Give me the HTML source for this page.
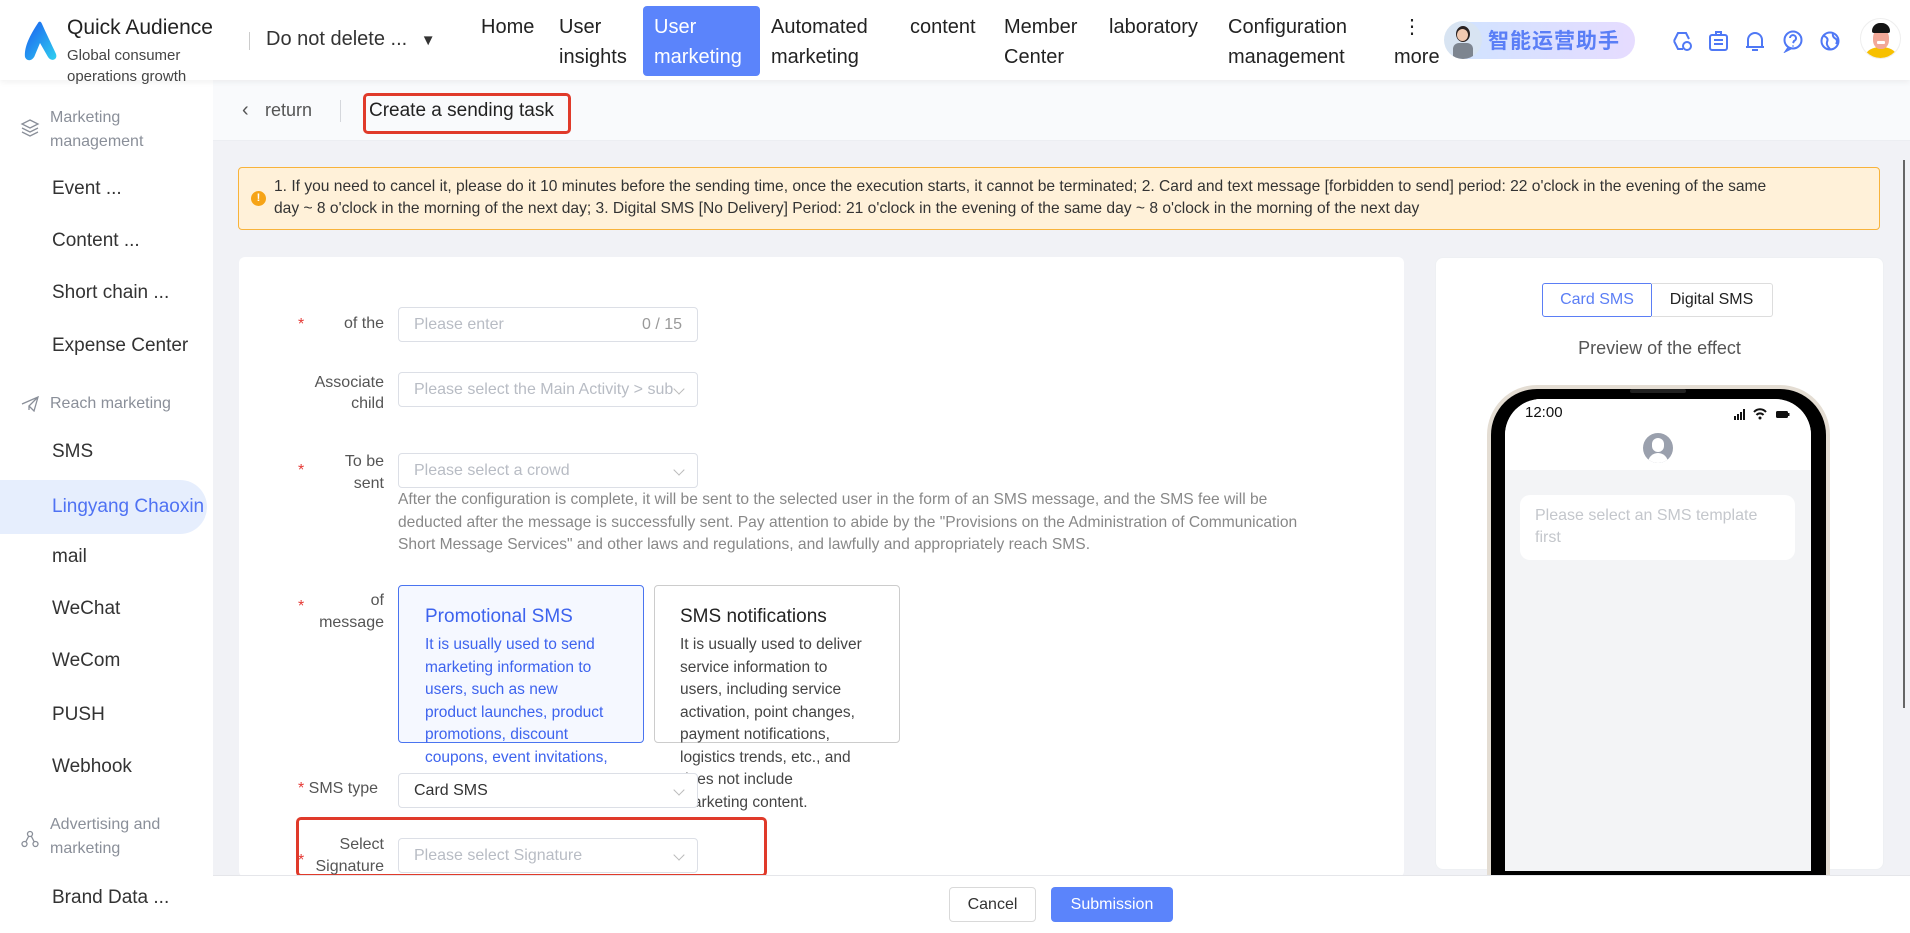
<!DOCTYPE html>
<html><head><meta charset="utf-8"><style>
*{box-sizing:border-box;margin:0;padding:0}
body{width:1910px;height:933px;overflow:hidden;background:#f1f2f6;font-family:"Liberation Sans","Noto Sans CJK SC",sans-serif;color:#333;position:relative}
.a{position:absolute;white-space:nowrap}
.hdr{position:absolute;left:0;top:0;width:1910px;height:80px;background:#fff;box-shadow:0 2px 6px rgba(0,0,0,.06);z-index:3}
.nav{font-size:20px;color:#222;line-height:30px}
.side{position:absolute;left:0;top:80px;width:213px;height:853px;background:#fff}
.si{position:absolute;left:52px;font-size:19px;color:#333;line-height:24px}
.sg{position:absolute;left:50px;font-size:16px;color:#8a8f99;line-height:24px}
.lab{position:absolute;text-align:right;font-size:16px;color:#555;line-height:22px;width:140px;left:244px}
.star{position:absolute;left:298px;color:#e53935;font-size:16px}
.inp{position:absolute;left:398px;width:300px;height:35px;border:1px solid #dcdfe6;border-radius:4px;background:#fff;font-size:16px;color:#b8bcc4;padding-left:15px;line-height:33px;overflow:hidden}
.chev{position:absolute;right:14px;top:12px;width:8px;height:8px;border-right:1px solid #bbb;border-bottom:1px solid #bbb;transform:rotate(45deg)}
</style></head><body>
<div class="hdr">
 <svg class="a" style="left:20px;top:21px" width="40" height="42" viewBox="0 0 40 42"><defs><linearGradient id="g" x1="0" y1="0" x2="1" y2="1"><stop offset="0" stop-color="#1a5cf0"/><stop offset="1" stop-color="#2fd0f0"/></linearGradient></defs><path d="M18 2 C10 14 4 26 5 36 C7 41 13 40 15 34 L20 22 L28 36 C31 41 38 39 36 33 C31 22 26 12 22 3 C21 0 19 0 18 2Z" fill="url(#g)"/></svg>
 <div class="a" style="left:67px;top:16px;font-size:21px;color:#222">Quick Audience</div>
 <div class="a" style="left:67px;top:45px;font-size:15px;color:#444;line-height:21px">Global consumer<br>operations growth</div>
 <div class="a" style="left:249px;top:32px;width:1px;height:18px;background:#ccc"></div>
 <div class="a" style="left:266px;top:28px;font-size:20px;color:#333">Do not delete ... <span style="font-size:15px;margin-left:8px">▼</span></div>
 <div class="a nav" style="left:481px;top:12px">Home</div>
 <div class="a nav" style="left:559px;top:12px">User<br>insights</div>
 <div class="a" style="left:643px;top:6px;width:117px;height:70px;background:#5b84fb;border-radius:4px"></div>
 <div class="a nav" style="left:654px;top:12px;color:#fff">User<br>marketing</div>
 <div class="a nav" style="left:771px;top:12px">Automated<br>marketing</div>
 <div class="a nav" style="left:910px;top:12px">content</div>
 <div class="a nav" style="left:1004px;top:12px">Member<br>Center</div>
 <div class="a nav" style="left:1109px;top:12px">laboratory</div>
 <div class="a nav" style="left:1228px;top:12px">Configuration<br>management</div>
 <div class="a nav" style="left:1402px;top:12px">⋮<br><span style="margin-left:-8px">more</span></div>
 <div class="a" style="left:1445px;top:22px;width:190px;height:37px;border-radius:19px;background:linear-gradient(90deg,#cfe3ff,#e6dcff)"></div>
 <div class="a" style="left:1444px;top:21px;width:38px;height:38px;border-radius:50%;background:#d8e4f2;overflow:hidden"><div style="position:absolute;left:12px;top:5px;width:14px;height:16px;border-radius:50%;background:#2a2220"></div><div style="position:absolute;left:13px;top:8px;width:11px;height:12px;border-radius:50%;background:#f1c9b0"></div><div style="position:absolute;left:9px;top:22px;width:20px;height:20px;border-radius:6px;background:#7d8590"></div></div>
 <div class="a" style="left:1488px;top:25px;font-size:21px;font-weight:bold;color:#5a7ef6;font-family:'Noto Sans CJK SC',sans-serif;letter-spacing:1px">智能运营助手</div>
 <svg class="a" style="left:1670px;top:29px" width="180" height="24" viewBox="0 0 180 24" fill="none" stroke="#4f78f5" stroke-width="2">
  <path d="M4 12 L8 4 H16 L19 10 M13 20 H8 L4 12"/><circle cx="17" cy="17" r="4"/>
  <rect x="40" y="6" width="17" height="15" rx="2"/><path d="M44 11 H53 M44 15 H53 M46 6 V3 H51 V6"/>
  <path d="M78 18 V11 A7 7 0 0 1 92 11 V18 Z M76 18 H94 M82 21 H88"/>
  <circle cx="123" cy="11" r="8.5"/><path d="M120 9 A3 3 0 1 1 124 12 L123 14 M123 16.5 V17.5 M118 19 L116 22 L121 19.5"/>
  <circle cx="160" cy="12" r="8.5"/><path d="M154 7 Q159 9 157 13 Q156 16 160 20 M163 4 Q162 8 166 10 Q168 12 166 15"/>
 </svg>
 <div class="a" style="left:1860px;top:18px;width:41px;height:41px;border-radius:50%;background:#fff;border:1px solid #eee;overflow:hidden"><div style="position:absolute;left:5px;top:28px;width:30px;height:16px;border-radius:50% 50% 0 0;background:#f7c000"></div><div style="position:absolute;left:12px;top:10px;width:16px;height:20px;border-radius:45%;background:#f2a898"></div><div style="position:absolute;left:11px;top:4px;width:18px;height:10px;border-radius:8px 8px 2px 2px;background:#151515"></div><div style="position:absolute;left:16px;top:22px;width:8px;height:3px;background:#fff;border-radius:1px"></div></div>
</div>

<div class="side">
 <svg class="a" style="left:20px;top:38px" width="20" height="20" viewBox="0 0 20 20" fill="none" stroke="#8a8f99" stroke-width="1.3"><path d="M10 2 L18 6 L10 10 L2 6Z M2 10 L10 14 L18 10 M2 14 L10 18 L18 14"/></svg>
 <div class="sg" style="top:26px">Marketing<br>management</div>
 <div class="si" style="top:97px">Event ...</div>
 <div class="si" style="top:149px">Content ...</div>
 <div class="si" style="top:201px">Short chain ...</div>
 <div class="si" style="top:254px">Expense Center</div>
 <svg class="a" style="left:21px;top:316px" width="18" height="16" viewBox="0 0 18 16" fill="none" stroke="#8a8f99" stroke-width="1.3"><path d="M1 8 L17 1 L13 15 L8 10 L17 1 M8 10 V14"/></svg>
 <div class="sg" style="top:312px">Reach marketing</div>
 <div class="si" style="top:360px">SMS</div>
 <div class="a" style="left:0;top:400px;width:207px;height:54px;background:#e6eefd;border-radius:0 27px 27px 0"></div>
 <div class="si" style="top:415px;color:#4f72f3">Lingyang Chaoxin</div>
 <div class="si" style="top:465px">mail</div>
 <div class="si" style="top:517px">WeChat</div>
 <div class="si" style="top:569px">WeCom</div>
 <div class="si" style="top:623px">PUSH</div>
 <div class="si" style="top:675px">Webhook</div>
 <svg class="a" style="left:21px;top:750px" width="18" height="18" viewBox="0 0 18 18" fill="none" stroke="#8a8f99" stroke-width="1.3"><circle cx="9" cy="4" r="2.5"/><circle cx="3.5" cy="14" r="2.5"/><circle cx="14.5" cy="14" r="2.5"/><path d="M7.8 6 L4.8 11.8 M10.2 6 L13.2 11.8"/></svg>
 <div class="sg" style="top:733px">Advertising and<br>marketing</div>
 <div class="si" style="top:806px">Brand Data ...</div>
</div>

<div class="a" style="left:213px;top:80px;width:1697px;height:61px;background:#f9fafc;border-bottom:1px solid #eceef2"></div>
<div class="a" style="left:242px;top:99px;font-size:20px;color:#555">‹</div>
<div class="a" style="left:265px;top:100px;font-size:18px;color:#555">return</div>
<div class="a" style="left:340px;top:100px;width:1px;height:22px;background:#d5d7dc"></div>
<div class="a" style="left:363px;top:93px;width:208px;height:41px;border:3px solid #e03a2a;border-radius:5px"></div>
<div class="a" style="left:369px;top:100px;font-size:19px;color:#222">Create a sending task</div>

<div class="a" style="left:238px;top:167px;width:1642px;height:63px;background:#fff1d9;border:1px solid #f8b33a;border-radius:4px"></div>
<div class="a" style="left:251px;top:191px;width:15px;height:15px;border-radius:50%;background:#f6a417;color:#fff;font-size:11px;text-align:center;line-height:15px;font-weight:bold">!</div>
<div class="a" style="left:274px;top:176px;font-size:15.6px;color:#333;line-height:22px;white-space:normal;width:1595px">1. If you need to cancel it, please do it 10 minutes before the sending time, once the execution starts, it cannot be terminated; 2. Card and text message [forbidden to send] period: 22 o'clock in the evening of the same<br>day ~ 8 o'clock in the morning of the next day; 3. Digital SMS [No Delivery] Period: 21 o'clock in the evening of the same day ~ 8 o'clock in the morning of the next day</div>

<div class="a" style="left:239px;top:257px;width:1165px;height:620px;background:#fff;border-radius:6px"></div>
<div class="a" style="left:1435px;top:257px;width:449px;height:613px;background:#fff;border:1px solid #eef0f3;border-radius:8px"></div>
<div class="a" style="left:1903px;top:160px;width:2px;height:548px;background:#666"></div>

<!-- form -->
<div class="star" style="top:316px">*</div>
<div class="lab" style="top:313px">of the</div>
<div class="inp" style="top:307px">Please enter<span style="position:absolute;right:15px;color:#999">0 / 15</span></div>
<div class="lab" style="top:372px;line-height:21px">Associate<br>child</div>
<div class="inp" style="top:372px">Please select the Main Activity &gt; sub<div class="chev" style="background:#fff"></div></div>
<div class="star" style="top:462px">*</div>
<div class="lab" style="top:451px">To be<br>sent</div>
<div class="inp" style="top:453px">Please select a crowd<div class="chev"></div></div>
<div class="a" style="left:398px;top:489px;font-size:15.6px;color:#888;line-height:22.5px">After the configuration is complete, it will be sent to the selected user in the form of an SMS message, and the SMS fee will be<br>deducted after the message is successfully sent. Pay attention to abide by the "Provisions on the Administration of Communication<br>Short Message Services" and other laws and regulations, and lawfully and appropriately reach SMS.</div>
<div class="star" style="top:598px">*</div>
<div class="lab" style="top:590px">of<br>message</div>
<div class="a" style="left:398px;top:585px;width:246px;height:158px;border:1.5px solid #4a74f0;border-radius:4px;background:#f5f8ff"></div>
<div class="a" style="left:654px;top:585px;width:246px;height:158px;border:1px solid #ccc;border-radius:4px"></div>
<div class="a" style="left:425px;top:606px;font-size:19px;color:#3d63ee">Promotional SMS</div>
<div class="a" style="left:425px;top:634px;font-size:15.5px;color:#3d63ee;line-height:22.5px">It is usually used to send<br>marketing information to<br>users, such as new<br>product launches, product<br>promotions, discount<br>coupons, event invitations,</div>
<div class="a" style="left:680px;top:606px;font-size:19px;color:#222">SMS notifications</div>
<div class="a" style="left:680px;top:634px;font-size:15.5px;color:#444;line-height:22.5px">It is usually used to deliver<br>service information to<br>users, including service<br>activation, point changes,<br>payment notifications,<br>logistics trends, etc., and<br>does not include<br>marketing content.</div>
<div class="inp" style="top:773px;color:#333;width:300px">Card SMS<div class="chev"></div></div>
<div class="a" style="left:298px;top:780px;font-size:16px;color:#555"><span style="color:#e53935">*</span> SMS type</div>
<div class="a" style="left:296px;top:817px;width:471px;height:60px;border:3px solid #e03a2a;border-radius:5px"></div>
<div class="star" style="top:852px">*</div>
<div class="lab" style="top:834px">Select<br>Signature</div>
<div class="inp" style="top:838px">Please select Signature<div class="chev"></div></div>

<!-- preview -->
<div class="a" style="left:1542px;top:283px;width:110px;height:34px;border:1px solid #5b7ef5;border-radius:3px 0 0 3px;color:#5b7ef5;font-size:16px;text-align:center;line-height:32px">Card SMS</div>
<div class="a" style="left:1651px;top:283px;width:122px;height:34px;border:1px solid #ddd;border-left:none;border-radius:0 3px 3px 0;color:#222;font-size:16px;text-align:center;line-height:32px">Digital SMS</div>
<div class="a" style="left:1435px;top:338px;width:449px;text-align:center;font-size:18px;color:#555">Preview of the effect</div>
<div class="a" style="left:1487px;top:385px;width:343px;height:500px;border:4px solid #e4ddd3;border-bottom:none;border-radius:50px 50px 0 0;background:#000"></div>
<div class="a" style="left:1505px;top:399px;width:306px;height:472px;border-radius:36px 36px 0 0;background:#f3f4f6;overflow:hidden"><div style="height:71px;background:#fff"></div></div>
<div class="a" style="left:1630px;top:389px;width:56px;height:4px;border-radius:2px;background:#222"></div>
<div class="a" style="left:1525px;top:404px;font-size:15px;color:#111">12:00</div>
<svg class="a" style="left:1734px;top:407px" width="60" height="14" viewBox="0 0 60 14"><rect x="0" y="9" width="2" height="4" fill="#111"/><rect x="3" y="7" width="2" height="6" fill="#111"/><rect x="6" y="5" width="2" height="8" fill="#111"/><rect x="9" y="2" width="2" height="11" fill="#111"/><path d="M20 5 A8 8 0 0 1 32 5 M22.5 8 A4.5 4.5 0 0 1 29.5 8" stroke="#111" stroke-width="2" fill="none"/><circle cx="26" cy="11" r="1.5" fill="#111"/><rect x="42" y="4" width="12" height="7" rx="1.5" fill="#111"/><rect x="54" y="6" width="1.5" height="3" fill="#111"/></svg>
<div class="a" style="left:1643px;top:433px;width:30px;height:30px;border-radius:50%;background:#9aa0ad;overflow:hidden"><div style="position:absolute;left:9px;top:5px;width:12px;height:14px;border-radius:6px;background:#fff"></div><div style="position:absolute;left:5px;top:20px;width:20px;height:14px;border-radius:10px 10px 0 0;background:#fff"></div></div>
<div class="a" style="left:1520px;top:495px;width:275px;height:65px;background:#fff;border-radius:10px;font-size:16px;color:#c4c7cc;padding:10px 15px;line-height:22px">Please select an SMS template<br>first</div>

<!-- bottom -->
<div class="a" style="left:213px;top:875px;width:1697px;height:58px;background:#fff;border-top:1px solid #e5e6ea"></div>
<div class="a" style="left:949px;top:887px;width:87px;height:35px;border:1px solid #d9d9d9;border-radius:4px;font-size:16px;text-align:center;line-height:33px;color:#333;background:#fff">Cancel</div>
<div class="a" style="left:1051px;top:887px;width:122px;height:35px;border-radius:4px;font-size:16px;text-align:center;line-height:35px;color:#fff;background:#5b84fb">Submission</div>
</body></html>
